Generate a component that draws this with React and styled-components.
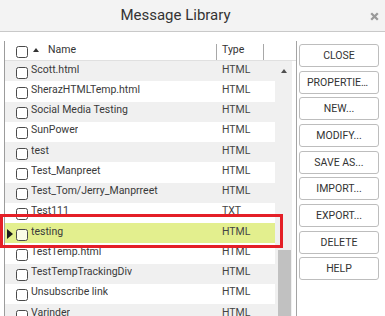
import styled, { createGlobalStyle } from "styled-components";

const GlobalStyle = createGlobalStyle`
  html, body {
    margin: 0;
    padding: 0;
    background: #fff;
  }
  body {
    font-family: Roboto, "Liberation Sans", Arial, sans-serif;
    color: #333;
  }
`;

const messages = [
	{ name: "Scott.html", type: "HTML" },
	{ name: "SherazHTMLTemp.html", type: "HTML" },
	{ name: "Social Media Testing", type: "HTML" },
	{ name: "SunPower", type: "HTML" },
	{ name: "test", type: "HTML" },
	{ name: "Test_Manpreet", type: "HTML" },
	{ name: "Test_Tom/Jerry_Manprreet", type: "HTML" },
	{ name: "Test111", type: "TXT" },
	{ name: "testing", type: "HTML", active: true },
	{ name: "TestTemp.html", type: "HTML" },
	{ name: "TestTempTrackingDiv", type: "HTML" },
	{ name: "Unsubscribe link", type: "HTML" },
	{ name: "Varinder", type: "HTML" },
];

const actions = [
	"Close",
	"Properties...",
	"New...",
	"Modify...",
	"Save as...",
	"Import...",
	"Export...",
	"Delete",
	"Help",
];

const Dialog = styled.div`
  position: relative;
  width: 385px;
  height: 316px;
  display: flex;
  flex-direction: column;
  overflow: hidden;
`;

const TitleBar = styled.header`
  display: flex;
  align-items: center;
  height: 32px;
  box-sizing: border-box;
  background: #f3f3f3;
  border-bottom: 1px solid #c9c9c9;
`;

const Title = styled.h1`
  flex: 1;
  margin: 0 0 1px;
  text-align: center;
  font-size: 15px;
  font-weight: 400;
  color: #333;
`;

const CloseArea = styled.div`
  width: 34px;
  box-sizing: border-box;
  padding-right: 6px;
  display: flex;
  justify-content: flex-end;
  align-items: center;
  margin-top: 2px;
`;

const Body = styled.div`
  flex: 1;
  display: flex;
  padding: 9px 0 0 4px;
  min-height: 0;
`;

const ListPane = styled.section`
  width: 293px;
  box-sizing: border-box;
  border-left: 1px solid #9c9c9c;
  border-right: 1px solid #a4a4a4;
  display: flex;
  flex-direction: column;
`;

const HeaderRow = styled.div`
  display: flex;
  align-items: center;
  height: 20px;
  box-sizing: border-box;
  border-bottom: 1px solid #e0e0e0;
  font-size: 10.5px;
  color: #333;
`;

const HeaderName = styled.div`
  width: 211px;
  box-sizing: border-box;
  padding-left: 11px;
  display: flex;
  align-items: center;
`;

const HeaderType = styled.div`
  width: 46px;
  box-sizing: border-box;
  padding-left: 5px;
  margin-bottom: 2px;
`;

const Separator = styled.span`
  align-self: flex-end;
  width: 1px;
  height: 16px;
  background: #a8a8a8;
`;

const SortArrow = styled.span`
  width: 0;
  height: 0;
  margin: 0 0 2px 5px;
  border-left: 3px solid transparent;
  border-right: 3px solid transparent;
  border-bottom: 4px solid #333;
`;

const HeaderLabel = styled.span`
  margin: 0 0 2px 9px;
`;

const ListBody = styled.div`
  flex: 1;
  display: flex;
  overflow: hidden;
`;

const Rows = styled.div`
  width: 270px;
`;

const Row = styled.div`
  display: flex;
  align-items: center;
  height: 20.25px;
  background: ${(p) => (p.$active ? "#e3ef8e" : p.$striped ? "#f0f0f0" : "#fff")};
  font-size: 10.5px;
  color: #3a3a3a;
`;

const NameCell = styled.div`
  width: 211px;
  display: flex;
  align-items: center;
  overflow: hidden;
`;

const MarkerCell = styled.span`
  width: 11px;
  box-sizing: border-box;
  padding-left: 2px;
  display: flex;
  align-items: center;
  margin-top: 2px;
`;

const Marker = styled.span`
  width: 0;
  height: 0;
  border-top: 5.5px solid transparent;
  border-bottom: 5.5px solid transparent;
  border-left: 6px solid #1c1c1c;
`;

const Checkbox = styled.span`
  flex: none;
  width: 12px;
  height: 12px;
  box-sizing: border-box;
  margin-top: 3px;
  border: 1px solid #4a4a4a;
  border-radius: 2.5px;
  background: ${(p) => (p.$active ? "#fbfce8" : "#fff")};
`;

const NameText = styled.span`
  margin: 0 0 4px 3px;
  white-space: nowrap;
  overflow: hidden;
`;

const TypeCell = styled.span`
  padding-left: 6px;
  margin-bottom: 4px;
  color: #444;
`;

const Scrollbar = styled.div`
  width: 17px;
  background: #f0f0f0;
  display: flex;
  flex-direction: column;
  align-items: center;
`;

const ScrollArrow = styled.span`
  width: 0;
  height: 0;
  margin: 8px 0 0 1px;
  border-left: 3.5px solid transparent;
  border-right: 3.5px solid transparent;
  border-bottom: 4px solid #505050;
`;

const ScrollThumb = styled.span`
  width: 13px;
  height: 80px;
  margin: 177px 0 0 2px;
  background: #c1c1c1;
`;

const ButtonColumn = styled.nav`
  display: flex;
  flex-direction: column;
  gap: 3.67px;
  padding-top: 3px;
  margin-left: 2px;
`;

const ActionButton = styled.button`
  display: block;
  width: 80px;
  height: 23px;
  box-sizing: border-box;
  padding: 0 7px;
  border: 1px solid #bdbdbd;
  border-radius: 3px;
  background: #fff;
  font-family: Roboto, "Liberation Sans", Arial, sans-serif;
  font-size: 10.5px;
  color: #333;
  text-transform: uppercase;
  white-space: nowrap;
  overflow: hidden;
  text-overflow: ellipsis;
  text-align: center;
`;

const Callout = styled.div`
  position: absolute;
  left: 0;
  top: 214px;
  width: 283px;
  height: 34px;
  box-sizing: border-box;
  border: 3px solid #e41f27;
  pointer-events: none;
`;

const CloseIcon = () => (
	<svg width="9" height="9" viewBox="0 0 9 9">
		<path
			d="M1.2 1.2 L7.8 7.8 M7.8 1.2 L1.2 7.8"
			stroke="#9a9a9a"
			strokeWidth="2.3"
			strokeLinecap="butt"
		/>
	</svg>
);

const App = () => {
	return (
		<>
			<GlobalStyle />
			<Dialog>
				<TitleBar>
					<Title>Message Library</Title>
					<CloseArea>
						<CloseIcon />
					</CloseArea>
				</TitleBar>
				<Body>
					<ListPane>
						<HeaderRow>
							<HeaderName>
								<Checkbox />
								<SortArrow />
								<HeaderLabel>Name</HeaderLabel>
							</HeaderName>
							<Separator />
							<HeaderType>Type</HeaderType>
							<Separator />
						</HeaderRow>
						<ListBody>
							<Rows>
								{messages.map((m, i) => (
									<Row key={m.name} $striped={i % 2 === 0} $active={m.active}>
										<NameCell>
											<MarkerCell>{m.active && <Marker />}</MarkerCell>
											<Checkbox $active={m.active} />
											<NameText>{m.name}</NameText>
										</NameCell>
										<TypeCell>{m.type}</TypeCell>
									</Row>
								))}
							</Rows>
							<Scrollbar>
								<ScrollArrow />
								<ScrollThumb />
							</Scrollbar>
						</ListBody>
					</ListPane>
					<ButtonColumn>
						{actions.map((label) => (
							<ActionButton key={label}>{label}</ActionButton>
						))}
					</ButtonColumn>
				</Body>
				<Callout />
			</Dialog>
		</>
	);
};

export default App;
